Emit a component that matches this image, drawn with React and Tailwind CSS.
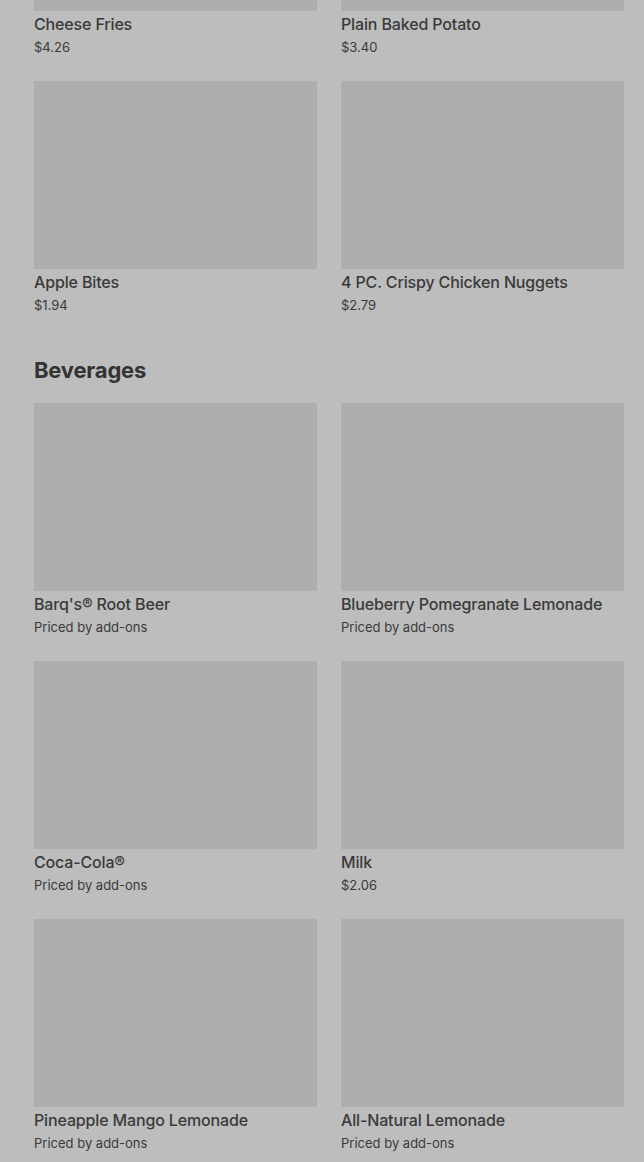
const sides = [
  { name: "Cheese Fries", price: "$4.26" },
  { name: "Plain Baked Potato", price: "$3.40" },
  { name: "Apple Bites", price: "$1.94" },
  { name: "4 PC. Crispy Chicken Nuggets", price: "$2.79" },
];

const beverages = [
  { name: "Barq's® Root Beer", price: "Priced by add-ons" },
  { name: "Blueberry Pomegranate Lemonade", price: "Priced by add-ons" },
  { name: "Coca-Cola®", price: "Priced by add-ons" },
  { name: "Milk", price: "$2.06" },
  { name: "Pineapple Mango Lemonade", price: "Priced by add-ons" },
  { name: "All-Natural Lemonade", price: "Priced by add-ons" },
];

const ItemCard = ({ item }) => (
  <div className="flex flex-col">
    <div className="h-[188px] w-full bg-[#aeaeae]" />
    <div className="mt-[3px] text-[16px] leading-5 font-medium tracking-[-0.15px] text-[#3a3a3a]">{item.name}</div>
    <div className="mt-[3px] text-[13px] leading-5 text-[#3a3a3a]">{item.price}</div>
  </div>
);

const App = () => {
  return (
    <div
      className="min-h-screen bg-[#bdbdbd] overflow-hidden"
      style={{ fontFamily: "Inter, 'Noto Sans', sans-serif" }}
    >
      <div className="pl-[34px] pr-[20px]">
        <div className="mt-[-177px] grid grid-cols-2 gap-x-[24px] gap-y-[24px]">
          {sides.map((item, i) => (
            <ItemCard key={i} item={item} />
          ))}
        </div>

        <h2 className="mt-[39px] mb-[17px] text-[22px] leading-8 font-bold tracking-[-0.2px] text-[#333]">Beverages</h2>

        <div className="grid grid-cols-2 gap-x-[24px] gap-y-[24px]">
          {beverages.map((item, i) => (
            <ItemCard key={i} item={item} />
          ))}
        </div>
      </div>
    </div>
  );
};

export default App;
